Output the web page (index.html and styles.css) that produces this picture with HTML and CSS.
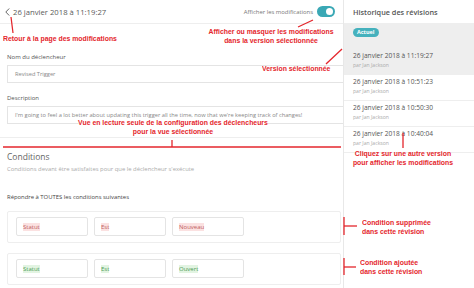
FILE: index.html
```html
<!DOCTYPE html>
<html lang="fr">
<head>
  <meta charset="UTF-8" />
  <title>Historique des révisions</title>
  <link rel="stylesheet" href="styles.css">
</head>
<body>
  <div class="page">
    <div class="main">
      <div class="topbar">
        <div class="back">
          <svg class="chev" width="5" height="8" viewBox="0 0 5 8"><polyline points="4.2,0.5 0.8,4 4.2,7.5" fill="none" stroke="#666" stroke-width="1"/></svg>
          <span>26 janvier 2018 à 11:19:27</span>
        </div>
        <div class="show-changes">
          <span>Afficher les modifications</span>
          <span class="switch"><span class="knob"></span></span>
        </div>
      </div>

      <div class="fields">
        <div class="field">
          <label>Nom du déclencheur</label>
          <div class="input">Revised Trigger</div>
        </div>
        <div class="field">
          <label>Description</label>
          <div class="input">I'm going to feel a lot better about updating this trigger all the time, now that we're keeping track of changes!</div>
        </div>
      </div>

      <div class="conditions">
        <h3>Conditions</h3>
        <p class="hint">Conditions devant être satisfaites pour que le déclencheur s'exécute</p>
        <p class="match">Répondre à TOUTES les conditions suivantes</p>
        <div class="cond removed">
          <div class="box"><span>Statut</span></div>
          <div class="box"><span>Est</span></div>
          <div class="box"><span>Nouveau</span></div>
        </div>
        <div class="cond added">
          <div class="box"><span>Statut</span></div>
          <div class="box"><span>Est</span></div>
          <div class="box"><span>Ouvert</span></div>
        </div>
      </div>
    </div>

    <aside class="history">
      <h2>Historique des révisions</h2>
      <ul>
        <li class="current">
          <span class="badge">Actuel</span>
          <div class="when">26 janvier 2018 à 11:19:27</div>
          <div class="who">par Jan Jackson</div>
        </li>
        <li>
          <div class="when">26 janvier 2018 à 10:51:23</div>
          <div class="who">par Jan Jackson</div>
        </li>
        <li>
          <div class="when">26 janvier 2018 à 10:50:30</div>
          <div class="who">par Jan Jackson</div>
        </li>
        <li>
          <div class="when">26 janvier 2018 à 10:40:04</div>
          <div class="who">par Jan Jackson</div>
        </li>
      </ul>
    </aside>
  </div>

  <!-- annotations posees par-dessus la capture -->
  <div class="notes">
    <svg class="lines" width="474" height="288" viewBox="0 0 474 288">
      <g stroke="#e4262c" stroke-width="1.3" fill="none">
        <line x1="11" y1="17" x2="13" y2="33"/>
        <line x1="313" y1="20" x2="298" y2="27"/>
        <line x1="342" y1="49" x2="326" y2="64"/>
        <line x1="3" y1="147" x2="341" y2="147"/>
        <line x1="172" y1="140" x2="172" y2="147"/>
        <line x1="403" y1="133" x2="403" y2="148"/>
        <line x1="344" y1="217" x2="344" y2="235"/>
        <line x1="344" y1="226" x2="357" y2="226"/>
        <line x1="344" y1="258" x2="344" y2="275"/>
        <line x1="344" y1="267" x2="356" y2="267"/>
      </g>
    </svg>
    <div class="note note-back">Retour à la page des modifications</div>
    <div class="note center note-toggle">Afficher ou masquer les modifications<br>dans la version sélectionnée</div>
    <div class="note note-version">Version sélectionnée</div>
    <div class="note center note-view"><span>Vue en lecture seule de la configuration des déclencheurs</span><br><span>pour la vue sélectionnée</span></div>
    <div class="note center note-click">Cliquez sur une autre version<br>pour afficher les modifications</div>
    <div class="note note-removed">Condition supprimée<br>dans cette révision</div>
    <div class="note note-added">Condition ajoutée<br>dans cette révision</div>
  </div>
</body>
</html>
```

FILE: styles.css
```css
* {
  box-sizing: border-box;
}

body {
  margin: 0;
  width: 474px;
  height: 288px;
  overflow: hidden;
  position: relative;
  font-family: 'Open Sans', sans-serif;
  color: #555;
  background: #fff;
}

.page {
  display: flex;
  height: 288px;
}

.main {
  width: 344px;
  border-right: 1px solid #e8e8e8;
}

.topbar {
  height: 24px;
  border-bottom: 1px solid #eee;
  display: flex;
  align-items: center;
  justify-content: space-between;
  padding: 0 8px 0 5px;
}

.back {
  display: flex;
  align-items: center;
  gap: 3px;
  font-size: 7.7px;
  color: #5a5a5a;
}

.show-changes {
  display: flex;
  align-items: center;
  gap: 4px;
  font-size: 5.9px;
  color: #777;
}

.switch {
  width: 18px;
  height: 11px;
  border-radius: 6px;
  background: #3aa8b5;
  display: flex;
  align-items: center;
  justify-content: flex-end;
  padding: 0 2px;
}

.knob {
  width: 7px;
  height: 7px;
  border-radius: 50%;
  background: #fff;
}

.fields {
  padding: 28px 0 13px 7px;
  border-bottom: 1px solid #eee;
}

.field + .field {
  margin-top: 10px;
}

label {
  display: block;
  font-size: 6px;
  line-height: 10px;
  color: #555;
  margin-bottom: 3px;
}

.input {
  height: 18px;
  border: 1px solid #e4e4e4;
  border-right: none;
  padding: 0 7px;
  font-size: 5.7px;
  line-height: 16px;
  color: #888;
  white-space: nowrap;
  overflow: hidden;
}

.conditions {
  padding: 12px 2px 0 7px;
}

h3 {
  margin: 0;
  font-size: 8.5px;
  line-height: 14px;
  font-weight: 400;
  color: #666;
}

.hint {
  margin: 0;
  font-size: 5.9px;
  line-height: 10px;
  color: #aaa;
}

.match {
  margin: 18px 0 0;
  font-size: 5.9px;
  line-height: 10px;
  color: #444;
}

.cond {
  display: flex;
  gap: 6px;
  margin-top: 9px;
  padding: 5px 8px 6px;
  border: 1px solid #eee;
  border-radius: 2px;
}

.cond + .cond {
  margin-top: 10px;
}

.box {
  width: 72px;
  height: 19px;
  border: 1px solid #e4e4e4;
  border-radius: 2px;
  padding-left: 6px;
  display: flex;
  align-items: center;
  font-size: 6px;
}

.removed span {
  background: #fbe1e1;
  color: #c0605e;
}

.added span {
  background: #e2f4e2;
  color: #4f9a55;
}

.history {
  flex: 1;
}

.history h2 {
  margin: 0;
  height: 24px;
  border-bottom: 1px solid #eee;
  padding-left: 9px;
  display: flex;
  align-items: center;
  font-size: 7.3px;
  font-weight: 600;
  color: #555;
}

.history ul {
  list-style: none;
  margin: 0;
  padding: 0;
}

.history li {
  padding: 2px 9px 4px;
  border-bottom: 1px solid #eee;
}

.history li.current {
  background: #eee;
  padding-top: 4px;
}

.badge {
  display: inline-block;
  height: 9px;
  padding: 0 4px;
  border-radius: 5px;
  background: #45b1bd;
  color: #fff;
  font-size: 5.5px;
  font-weight: 700;
  line-height: 9px;
  vertical-align: top;
}

.current .when {
  margin-top: 1px;
}

.when {
  font-size: 6.6px;
  line-height: 10px;
  color: #555;
}

.who {
  font-size: 5.1px;
  line-height: 9px;
  color: #aaa;
}

/* annotations */
.notes {
  position: absolute;
  top: 0;
  left: 0;
  width: 474px;
  height: 288px;
  pointer-events: none;
}

.lines {
  position: absolute;
  top: 0;
  left: 0;
}

.note {
  position: absolute;
  font-family: 'Liberation Sans', Arial, sans-serif;
  font-weight: 700;
  font-size: 8px;
  line-height: 9px;
  color: #e4262c;
  white-space: nowrap;
  transform: scaleX(0.86);
  transform-origin: 0 0;
}

.note.center {
  text-align: center;
  transform-origin: 50% 0;
}

.note-view span {
  background: #fff;
}

.note-back { left: 3px; top: 34px; }
.note-toggle { left: 191px; top: 27px; width: 160px; }
.note-version { left: 262px; top: 64px; }
.note-view { left: 53px; top: 118px; width: 240px; }
.note-click { left: 333px; top: 149px; width: 140px; }
.note-removed { left: 362px; top: 218px; }
.note-added { left: 360px; top: 258px; }
```
